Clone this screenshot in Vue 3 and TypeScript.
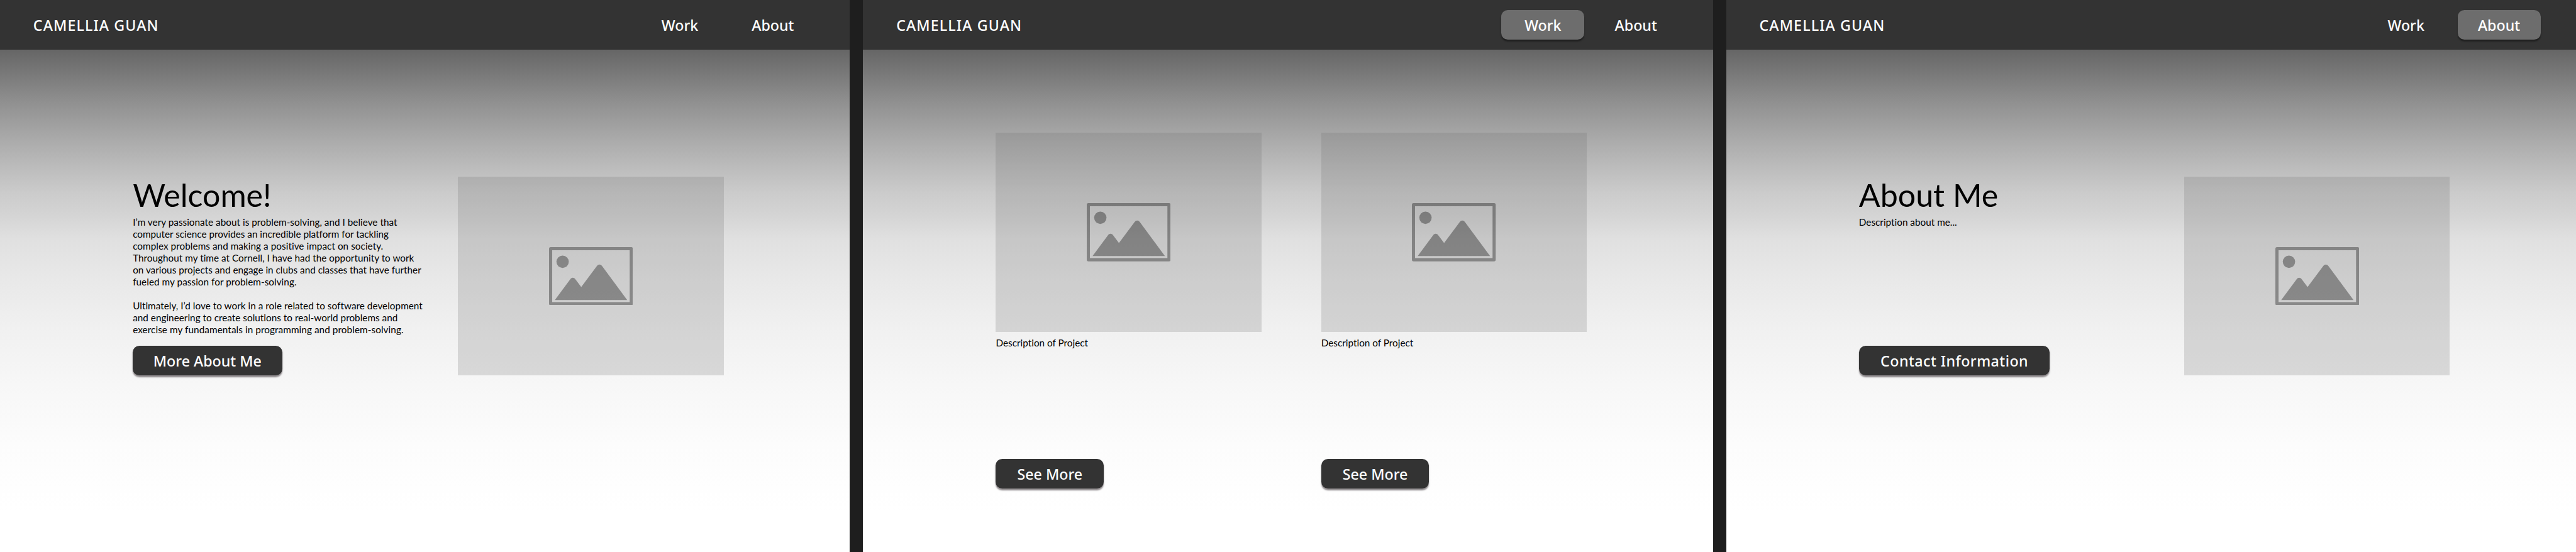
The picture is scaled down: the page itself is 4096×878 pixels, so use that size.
<script setup lang="ts">
import { defineComponent, h } from 'vue'

interface Line {
  text: string
  /** letter-spacing in thousandths of an em */
  track: number
}

type Page = 'home' | 'work' | 'about'

const pages: Page[] = ['home', 'work', 'about']

const links: { id: Page; label: string }[] = [
  { id: 'work', label: 'Work' },
  { id: 'about', label: 'About' },
]

const paragraphs: Line[][] = [
  [
    { text: 'I’m very passionate about is problem-solving, and I believe that', track: 1 },
    { text: 'computer science provides an incredible platform for tackling', track: -1 },
    { text: 'complex problems and making a positive impact on society.', track: 3 },
    { text: 'Throughout my time at Cornell, I have had the opportunity to work', track: 1 },
    { text: 'on various projects and engage in clubs and classes that have further', track: 0 },
    { text: 'fueled my passion for problem-solving.', track: 3 },
  ],
  [
    { text: 'Ultimately, I’d love to work in a role related to software development', track: 2 },
    { text: 'and engineering to create solutions to real-world problems and', track: 1 },
    { text: 'exercise my fundamentals in programming and problem-solving.', track: 5 },
  ],
]

const projects = ['Description of Project', 'Description of Project']

const Placeholder = defineComponent({
  render: () =>
    h('div', { class: 'placeholder' }, [
      h('svg', { viewBox: '0 0 252.5 175.5', 'aria-hidden': 'true' }, [
        h('path', {
          'fill-rule': 'evenodd',
          d: 'M5 0H247.5Q252.5 0 252.5 5V170.5Q252.5 175.5 247.5 175.5H5Q0 175.5 0 170.5V5Q0 0 5 0ZM9.5 9.7V165.8H243V9.7Z',
        }),
        h('circle', { cx: 40.9, cy: 44.2, r: 18.6 }),
        h('path', {
          d: 'M17.5 159.5L63.5 97.5C67.5 91 74.5 91 79.5 97L97 120.4L144 57.2C148.5 51 155.5 51 160 57.2L235.5 159.5Z',
        }),
      ]),
    ]),
})
</script>

<template>
  <main class="board">
    <section v-for="page in pages" :key="page" class="frame">
      <header class="bar">
        <span class="brand">CAMELLIA GUAN</span>
        <nav class="nav">
          <a
            v-for="link in links"
            :key="link.id"
            class="link"
            :class="{ active: link.id === page }"
          >{{ link.label }}</a>
        </nav>
      </header>

      <div v-if="page === 'home'" class="content intro">
        <div class="copy">
          <h1 class="title">Welcome!</h1>
          <p v-for="(lines, i) in paragraphs" :key="i" class="text">
            <span
              v-for="line in lines"
              :key="line.text"
              class="line"
              :style="{ letterSpacing: line.track / 1000 + 'em' }"
            >{{ line.text }}</span>
          </p>
          <button class="button more">More About Me</button>
        </div>
        <Placeholder />
      </div>

      <div v-else-if="page === 'work'" class="content projects">
        <article v-for="(project, i) in projects" :key="i" class="card">
          <Placeholder />
          <p class="text">{{ project }}</p>
          <button class="button see">See More</button>
        </article>
      </div>

      <div v-else class="content intro">
        <div class="copy">
          <h1 class="title">About Me</h1>
          <p class="text">Description about me...</p>
          <button class="button contact">Contact Information</button>
        </div>
        <Placeholder />
      </div>
    </section>
  </main>
</template>

<style>
/* 1rem = one hundred design pixels of the 7760-wide board */
html {
  font-size: calc(100vw / 77.6);
  overflow: hidden;
}
body {
  margin: 0;
}
</style>

<style scoped>
.board {
  display: flex;
  gap: 0.4rem;
  width: 77.6rem;
  height: 100vh;
  background: #1e1e1e;
  overflow: hidden;
  font-family: Lato, 'Noto Sans', sans-serif;
  font-variant-ligatures: none;
  color: #000;
}
.frame {
  width: 25.6rem;
  flex: none;
  height: 100%;
  background: linear-gradient(
    to bottom,
    rgb(102, 102, 102) 1.5rem,
    rgb(128, 128, 128) 2.48rem,
    rgb(145, 145, 145) 3.12rem,
    rgb(171, 171, 171) 4.24rem,
    rgb(187, 187, 187) 5rem,
    rgb(203, 203, 203) 5.8rem,
    rgb(211, 211, 211) 6.4rem,
    rgb(224, 224, 224) 7.2rem,
    rgb(231, 231, 231) 8.2rem,
    rgb(235, 235, 235) 8.9rem,
    rgb(240, 240, 240) 9.8rem,
    rgb(247, 247, 247) 11.6rem,
    rgb(252, 252, 252) 13.4rem,
    rgb(255, 255, 255) 15.4rem
  );
}
.bar {
  box-sizing: border-box;
  height: 1.5rem;
  padding: 0 1.07rem 0 1rem;
  display: flex;
  align-items: center;
  justify-content: space-between;
  background: #333;
}
.brand,
.link,
.button {
  font-family: 'Noto Sans', sans-serif;
  font-size: 0.44rem;
  font-weight: 500;
  color: #fff;
  white-space: nowrap;
}
.brand {
  padding-top: 0.02rem;
  letter-spacing: 0.048em;
}
.nav {
  display: flex;
  gap: 0.3rem;
}
.link,
.button {
  box-sizing: border-box;
  height: 0.9rem;
  padding: 0.02rem 0 0;
  display: flex;
  align-items: center;
  justify-content: center;
  border: 0;
  border-radius: 0.2rem;
}
.link {
  width: 2.5rem;
}
.link.active {
  background: #6d6d6d;
  box-shadow: 0 0.04rem 0.04rem rgba(0, 0, 0, 0.4);
}
.button {
  background: #333;
  box-shadow: 0 0.04rem 0.04rem rgba(40, 30, 35, 0.5);
}
.more {
  width: 4.5rem;
}
.see {
  width: 3.25rem;
}
.contact {
  width: 5.75rem;
  letter-spacing: 0.02em;
}
.content {
  display: flex;
}
.intro {
  padding: 3.82rem 0 0 4rem;
}
.copy {
  width: 9.8rem;
  height: 6rem;
  display: flex;
  flex-direction: column;
  align-items: flex-start;
}
.title {
  margin: 0 0 0.064rem;
  font-size: 0.95rem;
  line-height: 1.136rem;
  font-weight: 400;
}
.text {
  margin: 0;
  font-size: 0.29rem;
  line-height: 0.36rem;
  white-space: nowrap;
}
.text + .text {
  margin-top: 0.36rem;
}
.line {
  display: block;
}
.copy .button {
  margin-top: auto;
}
.projects {
  gap: 1.8rem;
  padding: 2.5rem 0 0 4rem;
}
.card {
  height: 10.73rem;
  display: flex;
  flex-direction: column;
  align-items: flex-start;
}
.card .text {
  margin-top: 0.16rem;
}
.card .button {
  margin-top: auto;
}
:deep(.placeholder) {
  width: 8rem;
  height: 6rem;
  flex: none;
  display: flex;
  align-items: center;
  justify-content: center;
  background: rgba(109, 109, 109, 0.22);
}
:deep(.placeholder svg) {
  width: 2.525rem;
  height: 1.755rem;
  fill: rgba(0, 0, 0, 0.34);
}
</style>
